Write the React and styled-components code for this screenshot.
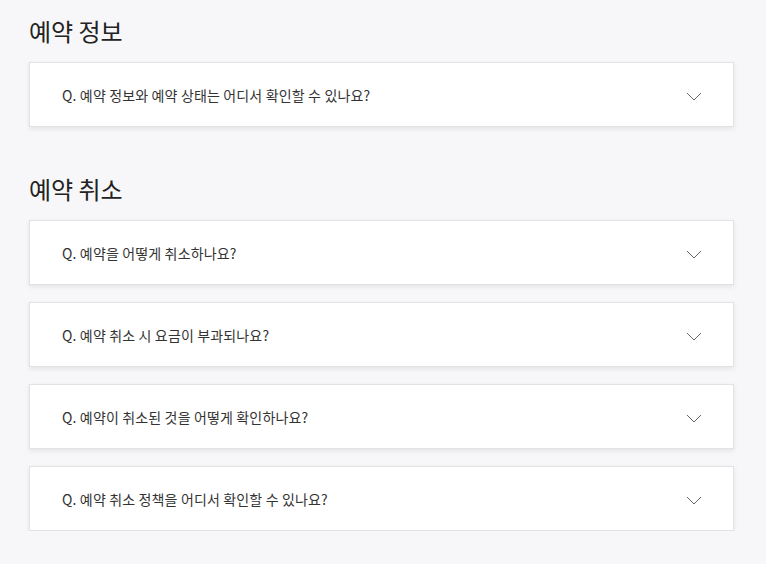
import React from "react";
import styled, { createGlobalStyle } from "styled-components";

const GlobalStyle = createGlobalStyle`
  html, body {
    margin: 0;
    padding: 0;
    background: #f7f7f9;
  }
  body {
    font-family: "Noto Sans CJK KR", "Noto Sans", sans-serif;
    color: #222;
  }
`;

const Page = styled.div`
  padding: 14px 32px 0 29px;
`;

const Section = styled.section`
  margin-bottom: 45px;
  &:last-child {
    margin-bottom: 0;
  }
`;

const SectionTitle = styled.h2`
  margin: 0 0 14px 0;
  font-size: 24px;
  font-weight: 400;
  line-height: 34px;
  color: #222;
`;

const List = styled.div`
  display: flex;
  flex-direction: column;
  gap: 17px;
`;

const Item = styled.div`
  display: flex;
  align-items: center;
  justify-content: space-between;
  height: 63px;
  padding: 0 31px 0 32px;
  background: #fff;
  border: 1px solid #e2e2e4;
  box-shadow: 0 2px 5px rgba(0, 0, 0, 0.08);
`;

const Question = styled.span`
  font-size: 14px;
  color: #333;
  letter-spacing: 0.15px;
`;

const ChevronIcon = styled.svg`
  margin-top: 4px;
  flex-shrink: 0;
`;

const Chevron = () => (
  <ChevronIcon width="16" height="9" viewBox="0 0 16 9" fill="none">
    <path d="M1 1l7 7 7-7" stroke="#666" strokeWidth="1" />
  </ChevronIcon>
);

const sections = [
  {
    title: "예약 정보",
    items: ["Q. 예약 정보와 예약 상태는 어디서 확인할 수 있나요?"],
  },
  {
    title: "예약 취소",
    items: [
      "Q. 예약을 어떻게 취소하나요?",
      "Q. 예약 취소 시 요금이 부과되나요?",
      "Q. 예약이 취소된 것을 어떻게 확인하나요?",
      "Q. 예약 취소 정책을 어디서 확인할 수 있나요?",
    ],
  },
];

export default function App() {
  return (
    <>
      <GlobalStyle />
      <Page>
        {sections.map((s) => (
          <Section key={s.title}>
            <SectionTitle>{s.title}</SectionTitle>
            <List>
              {s.items.map((q) => (
                <Item key={q}>
                  <Question>{q}</Question>
                  <Chevron />
                </Item>
              ))}
            </List>
          </Section>
        ))}
      </Page>
    </>
  );
}
